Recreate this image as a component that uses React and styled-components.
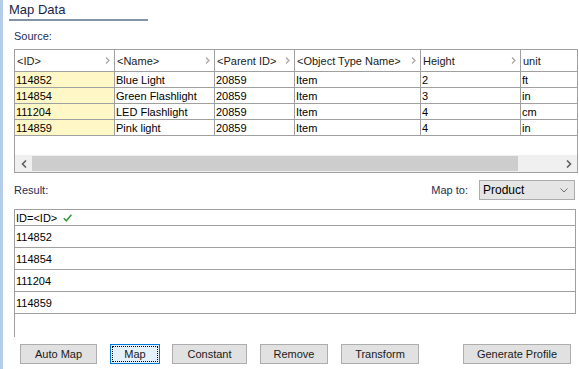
import React from "react";
import styled, { createGlobalStyle } from "styled-components";

const Global = createGlobalStyle`
  html, body { margin: 0; padding: 0; background: #fff; }
  body { font-family: "Liberation Sans", Arial, sans-serif; font-size: 11px; color: #000; }
`;

const Page = styled.div`
  display: flex;
  width: 579px;
  height: 369px;
  overflow: hidden;
  background: #fff;
`;

const Strip = styled.div`
  width: 3px;
  flex: none;
  background: #b6cdea;
`;

const Content = styled.div`
  display: flex;
  flex-direction: column;
  padding-left: 11px;
  width: 565px;
`;

const Title = styled.div`
  margin-left: -5px;
  width: 139px;
  padding: 2px 0 1px;
  font-size: 13px;
  line-height: 16px;
  color: #1b2546;
  border-bottom: 2px solid #8593a8;
`;

const Label = styled.div`
  color: #1e2f52;
  line-height: 13px;
  margin-top: ${(p) => p.$mt || 0}px;
`;

const Grid = styled.div`
  margin-top: 6px;
  width: 562px;
  height: 122px;
  border: 1px solid #a0a0a0;
  display: flex;
  flex-direction: column;
`;

const cols = "100px 100px 80px 126px 100px 56px";

const HeaderRow = styled.div`
  display: grid;
  grid-template-columns: ${cols};
  height: 21px;
  border-bottom: 1px solid #a0a0a0;
`;

const HeaderCell = styled.div`
  display: flex;
  align-items: center;
  justify-content: space-between;
  padding: 0 4px 0 2px;
  border-right: ${(p) => (p.$last ? "none" : "1px solid #a0a0a0")};
  color: #1a1a1a;
  overflow: hidden;
  white-space: nowrap;
`;

const DataRow = styled.div`
  display: grid;
  grid-template-columns: ${cols};
  height: 15px;
  border-bottom: 1px solid #a0a0a0;
`;

const Cell = styled.div`
  display: flex;
  align-items: center;
  padding-left: 1px;
  border-right: ${(p) => (p.$last ? "none" : "1px solid #a0a0a0")};
  background: ${(p) => (p.$key ? "#fff7c6" : "#fff")};
  white-space: nowrap;
  overflow: hidden;
`;

const Spacer = styled.div`
  flex: 1;
`;

const HScroll = styled.div`
  display: flex;
  height: 17px;
  background: #f0f0f0;
`;

const ScrollBtn = styled.div`
  width: 17px;
  display: flex;
  align-items: center;
  justify-content: center;
`;

const Thumb = styled.div`
  width: 486px;
  margin: 1px 0;
  background: #cdcdcd;
`;

const Track = styled.div`
  flex: 1;
`;

const ResultBar = styled.div`
  display: flex;
  align-items: center;
  justify-content: space-between;
  margin-top: 7px;
  height: 20px;
  width: 561px;
`;

const MapTo = styled.div`
  display: flex;
  align-items: center;
  gap: 11px;
`;

const Select = styled.div`
  box-sizing: border-box;
  width: 96px;
  height: 20px;
  border: 1px solid #acacac;
  background: #e5e5e5;
  display: flex;
  align-items: center;
  justify-content: space-between;
  padding: 0 6px 0 3px;
  color: #000;
  font-size: 12px;
`;

const ResultBox = styled.div`
  margin-top: 9px;
  width: 561px;
  height: 127px;
  border-top: 1px solid #a0a0a0;
  border-left: 1px solid #a0a0a0;
`;

const ResultRow = styled.div`
  display: flex;
  align-items: center;
  gap: 6px;
  height: ${(p) => (p.$head ? 15 : 21)}px;
  padding-left: 1px;
  border-bottom: 1px solid #a0a0a0;
  border-right: 1px solid #a0a0a0;
`;

const Buttons = styled.div`
  display: flex;
  margin-top: 7px;
  padding-left: 6px;
`;

const Button = styled.div`
  box-sizing: border-box;
  width: ${(p) => p.$w}px;
  margin-left: ${(p) => p.$ml || 0}px;
  height: 20px;
  display: flex;
  align-items: center;
  justify-content: center;
  border: 1px solid ${(p) => (p.$focus ? "#0078d7" : "#adadad")};
  background: ${(p) => (p.$focus ? "#e5f1fb" : "#e1e1e1")};
  color: #1a1a1a;
  position: relative;
  font-size: 11px;
  &::after {
    content: "";
    display: ${(p) => (p.$focus ? "block" : "none")};
    position: absolute;
    inset: 1px;
    border: 1px dotted #000;
  }
`;

const Arrow = () => (
  <svg width="5" height="7" viewBox="0 0 5 7">
    <path d="M1 0.5 L4 3.5 L1 6.5" fill="none" stroke="#a8a8a8" strokeWidth="1.3" />
  </svg>
);

const ScrollArrow = ({ left }) => (
  <svg width="6" height="8" viewBox="0 0 6 8">
    <path
      d={left ? "M5 0.5 L1.5 4 L5 7.5" : "M1 0.5 L4.5 4 L1 7.5"}
      fill="none"
      stroke="#606060"
      strokeWidth="1.6"
    />
  </svg>
);

const Chevron = () => (
  <svg width="8" height="5" viewBox="0 0 8 5">
    <path d="M0.5 0.5 L4 4 L7.5 0.5" fill="none" stroke="#707070" strokeWidth="1" />
  </svg>
);

const Check = () => (
  <svg width="9" height="8" viewBox="0 0 9 8">
    <path d="M0.8 4.2 L3.3 6.8 L8.4 0.8" fill="none" stroke="#3a9a3a" strokeWidth="1.6" />
  </svg>
);

const headers = ["<ID>", "<Name>", "<Parent ID>", "<Object Type Name>", "Height", "unit"];
const rows = [
  ["114852", "Blue Light", "20859", "Item", "2", "ft"],
  ["114854", "Green Flashlight", "20859", "Item", "3", "in"],
  ["111204", "LED Flashlight", "20859", "Item", "4", "cm"],
  ["114859", "Pink light", "20859", "Item", "4", "in"],
];

const buttons = [
  { label: "Auto Map", w: 77, ml: 0 },
  { label: "Map", w: 50, ml: 13, focus: true },
  { label: "Constant", w: 75, ml: 12 },
  { label: "Remove", w: 68, ml: 13 },
  { label: "Transform", w: 78, ml: 13 },
  { label: "Generate Profile", w: 108, ml: 44 },
];

export default function App() {
  return (
    <>
      <Global />
      <Page>
        <Strip />
        <Content>
          <Title>Map Data</Title>
          <Label $mt={9}>Source:</Label>
          <Grid>
            <HeaderRow>
              {headers.map((h, i) => (
                <HeaderCell key={h} $last={i === headers.length - 1}>
                  <span>{h}</span>
                  {i < headers.length - 1 && <Arrow />}
                </HeaderCell>
              ))}
            </HeaderRow>
            {rows.map((r) => (
              <DataRow key={r[0] + r[1]}>
                {r.map((c, i) => (
                  <Cell key={i} $key={i === 0} $last={i === r.length - 1}>
                    {c}
                  </Cell>
                ))}
              </DataRow>
            ))}
            <Spacer />
            <HScroll>
              <ScrollBtn>
                <ScrollArrow left />
              </ScrollBtn>
              <Thumb />
              <Track />
              <ScrollBtn>
                <ScrollArrow />
              </ScrollBtn>
            </HScroll>
          </Grid>
          <ResultBar>
            <Label>Result:</Label>
            <MapTo>
              <Label>Map to:</Label>
              <Select>
                <span>Product</span>
                <Chevron />
              </Select>
            </MapTo>
          </ResultBar>
          <ResultBox>
            <ResultRow $head>
              <span>ID=&lt;ID&gt;</span>
              <Check />
            </ResultRow>
            {rows.map((r) => (
              <ResultRow key={r[0] + r[1]}>{r[0]}</ResultRow>
            ))}
          </ResultBox>
          <Buttons>
            {buttons.map((b) => (
              <Button key={b.label} $w={b.w} $ml={b.ml} $focus={b.focus}>
                {b.label}
              </Button>
            ))}
          </Buttons>
        </Content>
      </Page>
    </>
  );
}
